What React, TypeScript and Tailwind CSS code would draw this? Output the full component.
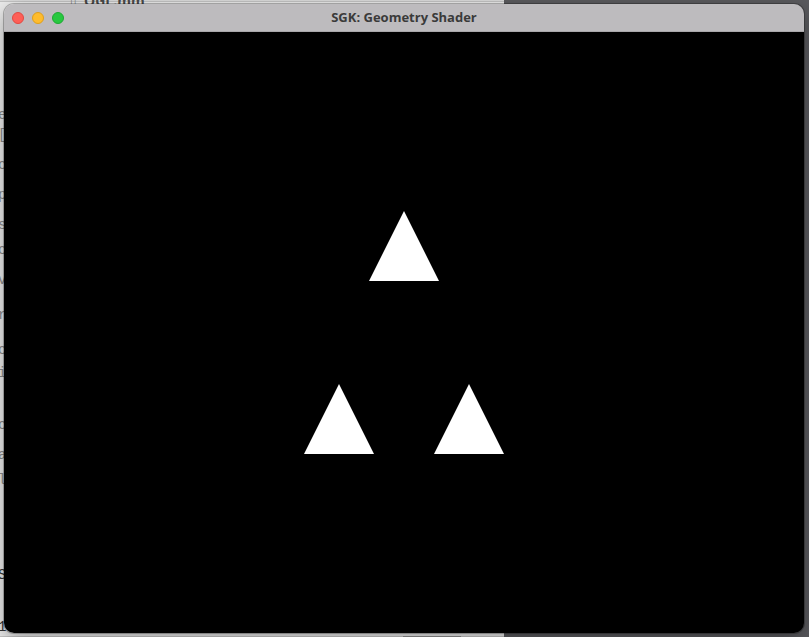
import React from 'react';

// letters peeking out from the editor window behind, with their top offsets
const editorLines: [string, number][] = [
  ['e', 0], ['[', 20], ['c', 50], ['p', 80], ['s', 110], ['c', 135], ['v', 165],
  ['r', 200], ['c', 235], ['i', 258], ['c', 310], ['a', 340], ['l', 365],
  ['S', 460], ['1', 512],
];

function TrafficLights() {
  return (
    <div className="flex items-center gap-2 pl-2">
      <span className="w-3 h-3 rounded-full bg-[#fe5f57] border border-[#e14942]" />
      <span className="w-3 h-3 rounded-full bg-[#febc2e] border border-[#de9f1c]" />
      <span className="w-3 h-3 rounded-full bg-[#28c840] border border-[#1ea932]" />
    </div>
  );
}

function Scene() {
  // triangles emitted by the geometry shader, in canvas pixels
  return (
    <svg width="800" height="600" viewBox="0 0 800 600" className="block">
      <polygon points="400,179 435,249 365,249" fill="#ffffff" />
      <polygon points="335,352 370,422 300,422" fill="#ffffff" />
      <polygon points="465,352 500,422 430,422" fill="#ffffff" />
    </svg>
  );
}

export default function App() {
  let prev = 0;
  return (
    <div
      className="relative w-[809px] h-[637px] overflow-hidden"
      style={{ fontFamily: '"Open Sans", "Liberation Sans", sans-serif' }}
    >
      {/* Desktop behind the window */}
      <div className="flex h-full">
        <div className="w-[504px] bg-[#ececec] flex flex-col">
          <div className="h-[4px] bg-[#dcdcdc] border-b border-[#c4c4c4] relative">
            <span className="absolute left-[70px] -top-[9px] text-[12px] text-[#888]">▯</span>
            <span className="absolute left-[84px] -top-[10px] text-[14px] font-bold text-[#4a4a4a]">OGL.mm</span>
          </div>
          <div
            className="flex-1 pt-[104px] text-[14px] leading-[18px] text-[#8a8a8a] -ml-[2px]"
            style={{ fontFamily: '"Liberation Mono", monospace' }}
          >
            {editorLines.map(([l, y], i) => {
              const gap = i === 0 ? 0 : y - prev - 18;
              prev = y;
              return (
                <div key={i} className={i >= 13 ? 'text-[#333]' : ''} style={{ marginTop: gap }}>
                  {l}
                </div>
              );
            })}
          </div>
          <div className="h-[4px] bg-[#c8c8c8] flex">
            <div className="ml-[403px] w-[58px] bg-[#8e8e8e]" />
          </div>
        </div>
        <div className="flex-1 bg-[#5a5a5e]" />
      </div>

      {/* App window */}
      <div className="absolute left-[4px] top-[4px] w-[800px] h-[629px] rounded-[10px] overflow-hidden flex flex-col shadow-[0_0_0_1px_rgba(0,0,0,0.25),0_6px_20px_rgba(0,0,0,0.35)]">
        <div className="h-[28px] bg-[#bdbbbe] relative flex items-center border-b border-[#a9a7aa]">
          <TrafficLights />
          <div className="absolute inset-0 flex items-center justify-center text-[13px] font-bold text-[#3a3a3a]">
            SGK: Geometry Shader
          </div>
        </div>
        <div className="flex-1 bg-black">
          <Scene />
        </div>
      </div>
    </div>
  );
}
